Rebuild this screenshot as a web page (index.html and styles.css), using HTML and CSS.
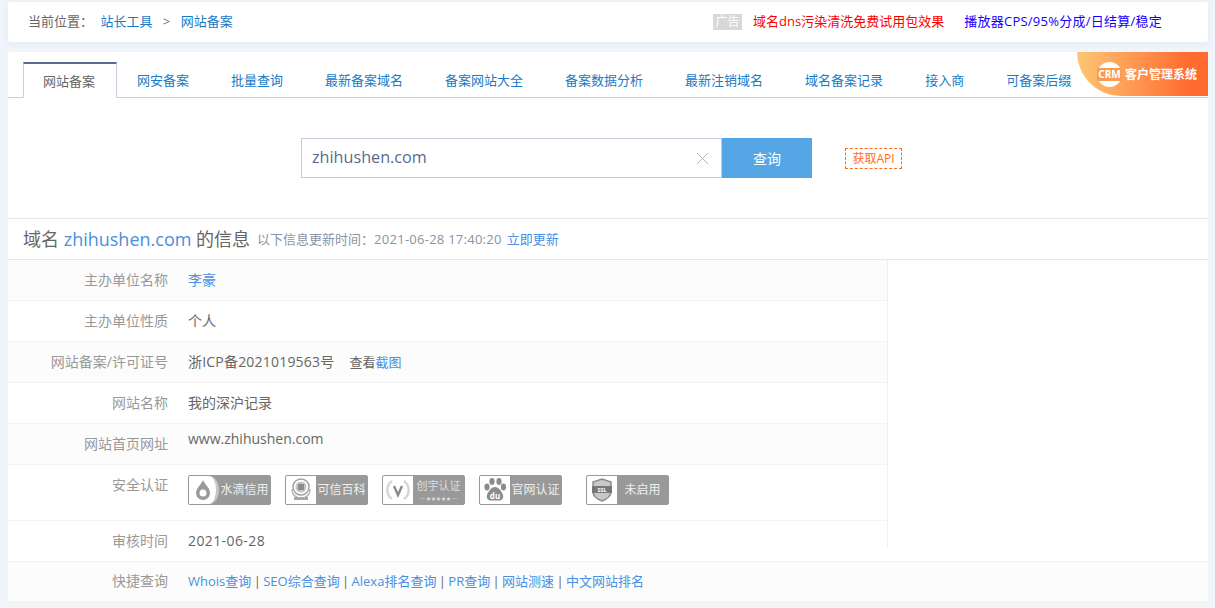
FILE: index.html
```html
<!DOCTYPE html>
<html lang="zh-CN">
<head>
  <meta charset="UTF-8" />
  <title>网站备案</title>
  <link rel="stylesheet" href="styles.css">
</head>
<body>

  <div class="topbar">
    <div class="crumbs">
      <span class="crumb-label">当前位置：</span>
      <a class="link">站长工具</a>
      <span class="crumb-sep">&gt;</span>
      <a class="link">网站备案</a>
    </div>
    <div class="ads">
      <span class="ad-tag">广告</span>
      <a class="ad-red">域名dns污染清洗免费试用包效果</a>
      <a class="ad-blue">播放器CPS/95%分成/日结算/稳定</a>
    </div>
  </div>

  <div class="main">
    <div class="crm">
      <svg class="crm-logo" width="25" height="25" viewBox="0 0 25 25">
        <circle cx="12.500" cy="12.500" r="12.500" fill="#fff"/>
        <rect x="0" y="6" width="25" height="13" fill="#fb9a52"/>
      </svg>
      <span class="crm-mark">CRM</span>
      <span class="crm-text">客户管理系统</span>
    </div>

    <div class="tabs">
      <a class="tab active">网站备案</a>
      <a class="tab">网安备案</a>
      <a class="tab">批量查询</a>
      <a class="tab">最新备案域名</a>
      <a class="tab">备案网站大全</a>
      <a class="tab">备案数据分析</a>
      <a class="tab">最新注销域名</a>
      <a class="tab">域名备案记录</a>
      <a class="tab">接入商</a>
      <a class="tab">可备案后缀</a>
    </div>

    <div class="search">
      <div class="search-box">
        <span class="search-value">zhihushen.com</span>
        <svg class="search-clear" width="13" height="13" viewBox="0 0 13 13">
          <path d="M1 1L12 12M12 1L1 12" stroke="#b4b4b4" stroke-width="1" fill="none"/>
        </svg>
      </div>
      <button class="search-btn">查询</button>
      <a class="api-link">获取API</a>
    </div>

    <div class="info-title">
      <span class="info-name">域名 <a class="link-blue">zhihushen.com</a> 的信息</span>
      <span class="info-time">以下信息更新时间：<span class="digits">2021-06-28 17:40:20</span></span>
      <a class="link-blue">立即更新</a>
    </div>

    <div class="rows">
      <div class="row shade">
        <div class="row-label">主办单位名称</div>
        <div class="row-value"><a class="link-blue">李豪</a></div>
      </div>
      <div class="row">
        <div class="row-label">主办单位性质</div>
        <div class="row-value">个人</div>
      </div>
      <div class="row shade">
        <div class="row-label">网站备案/许可证号</div>
        <div class="row-value"><span class="icp">浙ICP备2021019563号</span><a class="shot">查看<span class="link-blue">截图</span></a></div>
      </div>
      <div class="row">
        <div class="row-label">网站名称</div>
        <div class="row-value">我的深沪记录</div>
      </div>
      <div class="row shade">
        <div class="row-label">网站首页网址</div>
        <div class="row-value row-url">www.zhihushen.com</div>
      </div>
      <div class="row row-tall">
        <div class="row-label">安全认证</div>
        <div class="row-value badges">
          <span class="badge">
            <span class="badge-icon icon-curve">
              <svg width="16" height="20" viewBox="0 0 16 20"><path d="M8 0C6 5 1 8 1 13a7 7 0 0 0 14 0C15 8 10 5 8 0Z" fill="#9a9a9a"/><circle cx="8" cy="13" r="3.500" fill="#fff"/></svg>
            </span>
            <span class="badge-text">水滴信用</span>
          </span>
          <span class="badge">
            <span class="badge-icon">
              <svg width="26" height="26" viewBox="0 0 26 26"><circle cx="13" cy="10" r="8" fill="none" stroke="#a0a0a0" stroke-width="1.500"/><circle cx="13" cy="10" r="5.500" fill="#c4c4c4"/><rect x="10" y="7" width="6" height="6" fill="#8c8c8c"/><path d="M4 12c0 5 2 7 5 8M22 12c0 5-2 7-5 8" fill="none" stroke="#b5b5b5" stroke-width="1.500"/><rect x="6" y="20" width="14" height="3" fill="#a8a8a8"/></svg>
            </span>
            <span class="badge-text">可信百科</span>
          </span>
          <span class="badge">
            <span class="badge-icon">
              <svg width="26" height="26" viewBox="0 0 26 26"><path d="M7 4a11 11 0 0 0 0 18M19 4a11 11 0 0 1 0 18" fill="none" stroke="#d6d6d6" stroke-width="2.500"/><path d="M9 9l4 9 4-9" fill="none" stroke="#8c8c8c" stroke-width="2.400"/></svg>
            </span>
            <span class="badge-stack">
              <span class="badge-small">创宇认证</span>
              <span class="badge-stars">— ★★★★★ —</span>
            </span>
          </span>
          <span class="badge">
            <span class="badge-icon">
              <svg width="26" height="26" viewBox="0 0 26 26" fill="#8c8c8c"><ellipse cx="5" cy="10" rx="2.600" ry="3.400"/><ellipse cx="10" cy="4.500" rx="2.600" ry="3.400"/><ellipse cx="17" cy="4.500" rx="2.600" ry="3.400"/><ellipse cx="21.500" cy="10" rx="2.600" ry="3.400"/><path d="M13 10c-4 0-7 5-8 8-1 4 2 6 5 5.500h6c3 .5 6-1.500 5-5.500-1-3-4-8-8-8Z"/><text x="13" y="21.500" text-anchor="middle" class="paw-text">du</text></svg>
            </span>
            <span class="badge-text">官网认证</span>
          </span>
          <span class="badge badge-last">
            <span class="badge-icon">
              <svg width="24" height="26" viewBox="0 0 24 26"><path d="M12 2l9 3v10c0 4-4 7-9 9-5-2-9-5-9-9V5Z" fill="#c8c8c8" stroke="#8c8c8c" stroke-width="1.500"/><rect x="2" y="9" width="20" height="7" fill="#777"/><text x="12" y="15" text-anchor="middle" class="ssl-text">SSL</text></svg>
            </span>
            <span class="badge-text">未启用</span>
          </span>
        </div>
      </div>
      <div class="row row-audit">
        <div class="row-label">审核时间</div>
        <div class="row-value row-date">2021-06-28</div>
      </div>
      <div class="row shade row-quick">
        <div class="row-label">快捷查询</div>
        <div class="row-value">
          <a class="link-blue">Whois查询</a> | <a class="link-blue">SEO综合查询</a> | <a class="link-blue">Alexa排名查询</a> | <a class="link-blue">PR查询</a> | <a class="link-blue">网站测速</a> | <a class="link-blue">中文网站排名</a>
        </div>
      </div>
    </div>
  </div>

</body>
</html>
```

FILE: styles.css
```css
* {
  box-sizing: border-box;
}

html {
  background: #f4f5f6;
}

body {
  margin: 0;
  padding: 2px 7px 0 8px;
  height: 608px;
  overflow: hidden;
  font-family: "Open Sans", "Noto Sans CJK SC", sans-serif;
  font-size: 13px;
  color: #555;
  background: linear-gradient(#f0f5fb, #f0f5fb 602px, #f4f5f6 602px);
}

a {
  text-decoration: none;
  cursor: pointer;
}

.link {
  color: #1a7ac4;
}

.link-blue {
  color: #4a8fe0;
}

/* barre du haut */
.topbar {
  height: 40px;
  background: #fff;
  border-radius: 3px;
  display: flex;
  align-items: center;
  justify-content: space-between;
  padding: 0 46px 0 20px;
  box-shadow: 0 2px 6px rgba(200, 215, 235, 0.35);
}

.crumbs {
  margin-bottom: 4px;
}

.crumb-label {
  color: #666;
  margin-right: 4px;
}

.crumb-sep {
  color: #777;
  margin: 0 7px;
}

.ads {
  display: flex;
  align-items: center;
}

.ad-tag {
  background: #d8d8d8;
  color: #fff;
  font-size: 12px;
  line-height: 16px;
  width: 29px;
  text-align: center;
  margin-right: 11px;
}

.ad-red {
  color: #ff0000;
  margin-right: 20px;
  margin-bottom: 4px;
}

.ad-blue {
  color: #1500ff;
  letter-spacing: 0.25px;
  margin-bottom: 4px;
}

/* bloc principal */
.main {
  position: relative;
  margin-top: 10px;
  height: 550px;
  background: #fff;
}

.crm {
  position: absolute;
  top: 0;
  right: 0;
  width: 131px;
  height: 44px;
  border-bottom-left-radius: 44px;
  background: linear-gradient(90deg, #fdc674, #ff6c30 85%);
}

.crm-logo {
  position: absolute;
  left: 20px;
  top: 10px;
}

.crm-mark {
  position: absolute;
  left: 20px;
  top: 10px;
  width: 25px;
  line-height: 24px;
  text-align: center;
  color: #fff;
  font-size: 10px;
  font-weight: 700;
}

.crm-text {
  position: absolute;
  left: 48px;
  top: 11px;
  line-height: 24px;
  color: #fff;
  font-size: 12px;
  font-weight: 700;
  white-space: nowrap;
}

.tabs {
  display: flex;
  height: 46px;
  padding: 10px 0 0 15px;
  border-bottom: 1px solid #c8cedd;
}

.tab {
  height: 36px;
  line-height: 34px;
  padding: 0 21px 0 19px;
  border: 1px solid transparent;
  color: #1a7ac4;
  white-space: nowrap;
}

.tab.active {
  color: #666;
  background: #fff;
  border: 1px solid #c8cedd;
  border-top: 2px solid #5a6a8c;
  border-bottom: 1px solid #fff;
}

.search {
  height: 120px;
  padding: 40px 0 0 293px;
  display: flex;
  align-items: flex-start;
}

.search-box {
  width: 421px;
  height: 40px;
  border: 1px solid #c5cddc;
  display: flex;
  align-items: center;
  justify-content: space-between;
  padding: 0 12px 0 10px;
}

.search-value {
  font-size: 16.200px;
  color: #5a6a8c;
  margin-bottom: 2px;
}

.search-btn {
  width: 90px;
  height: 40px;
  border: none;
  background: #55a6e5;
  color: #fff;
  font-family: inherit;
  font-size: 14px;
}

.api-link {
  margin: 10px 0 0 33px;
  width: 57px;
  height: 21px;
  line-height: 19px;
  border: 1px dashed #ff6c1a;
  color: #ff6c1a;
  font-size: 12px;
  text-align: center;
}

.info-title {
  height: 42px;
  border-top: 1px solid #e4e8f1;
  border-bottom: 1px solid #e8e8ec;
  padding: 0 0 2px 15px;
  display: flex;
  align-items: center;
  gap: 6px;
}

.info-name {
  font-size: 18px;
  color: #666;
  margin-right: 1px;
}

.info-time {
  color: #8a93a6;
  margin-right: -1px;
}

.digits {
  letter-spacing: 0.26px;
}

/* lignes d'infos */
.row {
  display: flex;
  height: 41px;
  width: 880px;
  border-bottom: 1px solid #f3f3f3;
  border-right: 1px solid #f0f0f0;
}

.shade {
  background: #fcfcfc;
}

.row-tall {
  height: 56px;
}

.row-audit {
  position: relative;
  height: 40px;
  border-right: none;
  border-bottom: none;
}

.row-audit::after {
  content: "";
  position: absolute;
  top: 0;
  right: 0;
  width: 1px;
  height: 27px;
  background: #f0f0f0;
}

.row-quick {
  width: 100%;
  border-top: 1px solid #f1f1f1;
  border-right: none;
}

.row-label {
  width: 160px;
  flex: none;
  line-height: 40px;
  font-size: 14px;
  text-align: right;
  color: #999;
}

.row-value {
  margin-left: 20px;
  line-height: 40px;
  font-size: 14px;
  color: #666;
}

.row-url {
  line-height: 30px;
}

.row-date {
  letter-spacing: 0.4px;
}

.row-quick .row-label {
  line-height: 38px;
}

.row-quick .row-value {
  font-size: 13px;
  line-height: 38px;
  word-spacing: -1px;
}

.icp {
  letter-spacing: 0.2px;
}

.shot {
  margin-left: 15px;
  color: #666;
  font-size: 13px;
}

.badges {
  display: flex;
  padding-top: 10px;
  gap: 14px;
}

.badge {
  width: 83px;
  height: 30px;
  display: flex;
  background: #999;
  border: 1px solid #999;
  border-radius: 2px;
  overflow: hidden;
}

.badge-last {
  margin-left: 10px;
}

.badge-icon {
  width: 30px;
  flex: none;
  background: #fff;
  display: flex;
  align-items: center;
  justify-content: center;
}

.icon-curve {
  border-radius: 0 10px 10px 0 / 0 50% 50% 0;
  border-right: 3px solid #c6c6c6;
}

.badge-text {
  flex: 1;
  text-align: center;
  line-height: 28px;
  font-size: 12px;
  color: #eee;
  white-space: nowrap;
}

.badge-stack {
  flex: 1;
  display: flex;
  flex-direction: column;
  align-items: center;
  padding-top: 1px;
  color: #ddd;
}

.badge-small {
  font-size: 11px;
  line-height: 17px;
}

.badge-stars {
  font-size: 5px;
  line-height: 8px;
  white-space: nowrap;
}

.paw-text {
  font-size: 8px;
  font-weight: 700;
  fill: #fff;
}

.ssl-text {
  font-size: 5.500px;
  font-weight: 700;
  fill: #fff;
}
```
